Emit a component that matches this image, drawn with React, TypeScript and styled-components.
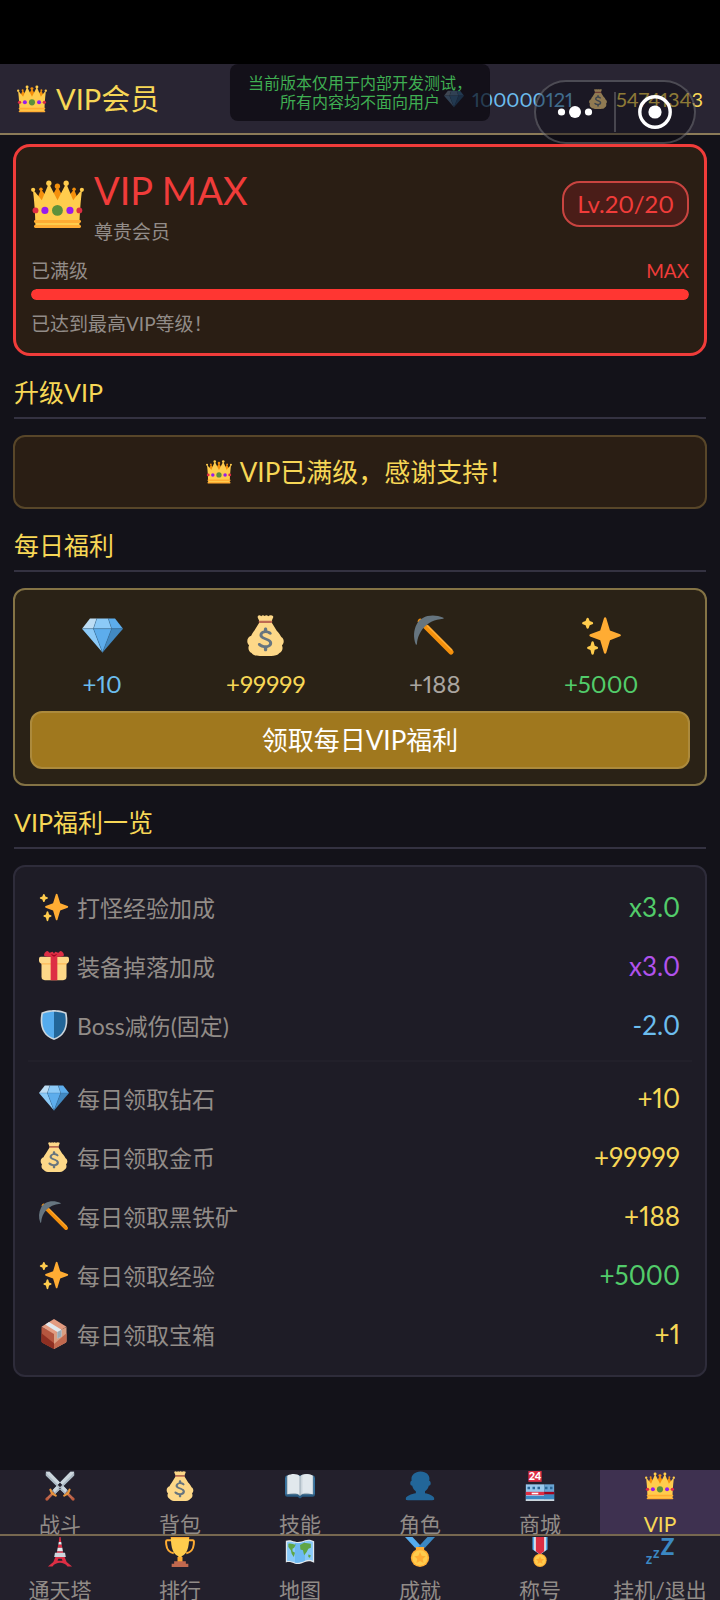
import React from "react";
import styled, { createGlobalStyle } from "styled-components";

const color = {
  page: "#131219",
  bar: "#23202c",
  header: "#292533",
  gold: "#f7d756",
  goldLine: "#8b7b58",
  text: "#928c88",
  red: "#f03c3a",
  green: "#52cc6a",
  purple: "#b152ec",
  blue: "#6cbdee",
  line: "#343241",
};

const GlobalStyle = createGlobalStyle`
  *, *::before, *::after { box-sizing: border-box; }
  html { background: #000; }
  body {
    margin: 0;
    background: ${color.page};
    color: ${color.text};
    font-family: Lato, "Noto Sans CJK SC", sans-serif;
    font-weight: 400;
    font-variant-numeric: proportional-nums;
  }
  h1, h2, p, ul, dl, dd { margin: 0; padding: 0; }
  ul { list-style: none; }
`;

/* ---------- emoji icons, all on a 36 unit grid ---------- */

const EmojiSvg = styled.svg<{ $size: number }>`
  display: block;
  flex: none;
  width: ${(p) => p.$size}px;
  height: ${(p) => p.$size}px;
  overflow: visible;
`;

const art = {
  crown: (
    <>
      <path fill="#F4900C" d="M14.174 17.075L6.75 7.594l-3.722 9.481zM17.938 5.534l-6.563 12.389H24.5zM21.826 17.075l7.424-9.481 3.722 9.481z" />
      <path fill="#FFCC4D" d="M28.669 15.19L23.887 3.523l-5.88 11.668-.007.003-.007-.004-5.88-11.668L7.331 15.19C4.197 10.833 1.28 8.042 1.28 8.042S3 20.75 3 33h30c0-12.25 1.72-24.958 1.72-24.958s-2.917 2.791-6.051 7.148z" />
      <circle fill="#5C913B" cx="17.957" cy="22" r="3.688" />
      <circle fill="#981CEB" cx="26.463" cy="22" r="2.412" />
      <circle fill="#DD2E44" cx="32.852" cy="22" r="1.986" />
      <circle fill="#981CEB" cx="9.45" cy="22" r="2.412" />
      <circle fill="#DD2E44" cx="3.061" cy="22" r="1.986" />
      <path fill="#FFAC33" d="M33 34H3a1 1 0 010-2h30a1 1 0 010 2zm0-3.486H3a1 1 0 010-2h30a1 1 0 010 2z" />
      <circle fill="#FFCC4D" cx="1.447" cy="8.042" r="1.407" />
      <circle fill="#F4900C" cx="6.75" cy="7.594" r="1.192" />
      <circle fill="#FFCC4D" cx="12.113" cy="3.523" r="1.784" />
      <circle fill="#FFCC4D" cx="34.553" cy="8.042" r="1.407" />
      <circle fill="#F4900C" cx="29.25" cy="7.594" r="1.192" />
      <circle fill="#FFCC4D" cx="23.887" cy="3.523" r="1.784" />
      <circle fill="#F4900C" cx="17.938" cy="5.534" r="1.784" />
    </>
  ),
  diamond: (
    <>
      <path fill="#BDDDF4" d="M13 3H7l-7 9h10z" />
      <path fill="#5DADEC" d="M36 12l-7-9h-6l3 9z" />
      <path fill="#4289C1" d="M26 12h10L18 33z" />
      <path fill="#8CCAF7" d="M10 12H0l18 21zm3-9l-3 9h16l-3-9z" />
      <path fill="#5DADEC" d="M18 33l-8-21h16z" />
      <path fill="none" stroke="#2b6496" strokeWidth=".35" d="M0 12h36M13 3l-3 9 8 21 8-21-3-9" />
    </>
  ),
  bag: (
    <>
      <path fill="#FDD888" d="M31.898 19.4C30.6 16.4 28 14 28 14l-5-8H13l-5 8s-1.419 1.433-2.567 4.275C3.444 18.935 2 20.789 2 23c0 1.448.625 2.743 1.609 3.655C3.233 27.357 3 28.147 3 29c0 1.958 1.136 3.636 2.775 4.454C7.204 35.585 9.992 36 13 36h10c3.016 0 5.804-.415 7.228-2.546C31.864 32.636 33 30.958 33 29c0-.807-.211-1.562-.555-2.239C33.395 25.844 34 24.542 34 23.062c0-1.5-.8-2.862-2.102-3.662z" />
      <path fill="#FDD888" d="M11.200 1c.8-1 2.300-.8 3 0 .9-1 2.300-.9 3-.1 1.200-.9 2.400-.7 3.200.1 1-.9 3.300-1 4.300 0 .6.800-.9 2.600-1.200 4.500h-11C12.200 3.500 10.600 2 11.200 1z" />
      <path fill="#BF6952" d="M24 6a1 1 0 01-1 1H13a1 1 0 010-2h10a1 1 0 011 1z" />
      <path fill="#67757F" d="M23.901 24.542c0-4.477-8.581-4.185-8.581-6.886 0-1.308 1.301-1.947 2.811-1.947 2.538 0 2.99 1.569 4.139 1.569.813 0 1.205-.493 1.205-1.046 0-1.284-2.024-2.256-3.965-2.592V12.4c0-.773-.65-1.4-1.454-1.4-.805 0-1.456.627-1.456 1.4v1.283c-2.116.463-3.938 1.875-3.938 4.148 0 4.244 8.579 4.07 8.579 6.886 0 .977-1.099 1.945-3.217 1.945-3.181 0-4.241-2.034-5.53-2.034-.627 0-1.188.508-1.188 1.251 0 1.182 2.054 2.603 5.294 3.053v1.476c0 .772.653 1.4 1.455 1.4.804 0 1.455-.628 1.455-1.4v-1.524c2.587-.475 4.391-1.826 4.391-4.342z" />
    </>
  ),
  pickaxe: (
    <>
      <path stroke="#F4900C" strokeWidth="4.6" strokeLinecap="round" d="M5.500 5.500L32.500 32.500" />
      <path stroke="#FFAC33" strokeWidth="1.4" strokeLinecap="round" d="M12 9.500L33 30.500" />
      <path fill="#66757F" d="M25.800 2.400C15.500-2 5.500 1.500 2.500 8-.4 13.200-.7 20 1.500 25.700c.3.700 1 .6 1.100-.2C3.400 15 10.500 4.500 25.600 3.300c.6-.1.700-.6.200-.9z" />
    </>
  ),
  sparkles: (
    <>
      <path fill="#FFAC33" d="M34.347 16.893l-8.899-3.294-3.323-10.891c-.128-.42-.517-.708-.956-.708-.439 0-.828.288-.956.708l-3.322 10.891-8.9 3.294c-.393.146-.653.519-.653.938 0 .418.26.793.653.938l8.895 3.293 3.324 11.223c.126.424.516.715.959.715.442 0 .833-.291.959-.716l3.324-11.223 8.896-3.293c.391-.144.652-.518.652-.937 0-.418-.261-.792-.653-.938z" />
      <path fill="#FFCC4D" d="M14.347 27.894l-2.314-.856-.9-3.3c-.118-.436-.513-.738-.964-.738-.451 0-.846.302-.965.737l-.9 3.3-2.313.856c-.393.145-.653.52-.653.938 0 .418.26.793.653.938l2.301.853.907 3.622c.112.444.511.756.97.756.459 0 .858-.312.97-.757l.907-3.622 2.301-.853c.393-.144.653-.519.653-.937 0-.418-.26-.793-.653-.937zM10.009 6.231l-2.364-.875-.876-2.365c-.145-.393-.519-.653-.938-.653-.418 0-.792.26-.938.653l-.875 2.365-2.365.875c-.393.146-.653.52-.653.938 0 .418.26.793.653.938l2.365.875.875 2.365c.146.393.52.653.938.653.418 0 .792-.26.938-.653l.875-2.365 2.365-.875c.393-.146.653-.52.653-.938 0-.418-.26-.792-.653-.938z" />
    </>
  ),
  gift: (
    <>
      <path fill="#FDD888" d="M33 31a4 4 0 01-4 4H7a4 4 0 01-4-4V13h30z" />
      <path fill="#FCAB40" d="M3 14h30v2H3z" />
      <path fill="#FDD888" d="M36 11a4 4 0 01-4 4H4a4 4 0 01-4-4V9a2 2 0 012-2h32a2 2 0 012 2z" />
      <path fill="#DD2E44" d="M14 7h8v28h-8zM18 7C16 7 8 7 6.500 6 5 4 8 0 10 0c1 0 2 2 3 2s2-1 3-1 1.500 2 2 2 1-2 2-2 2 1 3 1 2-2 3-2c2 0 5 4 3.500 6-1.500 1-9.500 1-11.500 1z" />
      <path fill="#A0041E" d="M14 3.500c1 1.500 2.500 2.500 4 3.500 1.500-1 3-2 4-3.500-1.500.2-3 .8-4 1.500-1-.7-2.500-1.300-4-1.500z" />
    </>
  ),
  shield: (
    <>
      <path fill="#CCD6DD" d="M33 3C26 0 18 0 18 0S10 0 3 3c-3 15 0 28 15 33 15-5 18-18 15-33z" />
      <path fill="#55ACEE" d="M18 33.884C6.412 29.729 1.961 19.831 4.76 4.444 11.063 2.029 17.928 2 18 2z" />
      <path fill="#226699" d="M31.24 4.444C24.955 2.024 18.131 2.001 18 2v31.884c11.589-4.155 16.04-14.053 13.24-29.44z" />
    </>
  ),
  box: (
    <>
      <path fill="#B5563F" d="M3 9.500L18 17v19L4 28.500a2 2 0 01-1-1.700z" />
      <path fill="#8E2F22" d="M3 17l15 12v7L4 28.500a2 2 0 01-1-1.700z" />
      <path fill="#D99E82" d="M33 9.500L18 17v19l14-7.500a2 2 0 001-1.700z" />
      <path fill="#C1694F" d="M33 17L18 30v6l14-7.500a2 2 0 001-1.700z" />
      <path fill="#E39B80" d="M18 0l15 9.200L18 18 3 9.200z" />
      <path fill="#E1E8ED" d="M12 3.700l15 9.300v8l-5 2.500v-8L7.500 6.500z" />
      <path fill="#99AAB5" d="M22 15.500l5-2.500v8l-5 2.500z" />
    </>
  ),
  swords: (
    <>
      <path fill="#8899A6" d="M1 1h4.500L28 24l-4 4L1 5.500zM35 1h-4.500L8 24l4 4L35 5.500z" />
      <path fill="#CCD6DD" d="M1 1h4.500L26.500 22.500 24.500 26 2 3.500zM35 1h-4.500L9.500 22.500l2 3.500L34 3.500z" />
      <path fill="#AEBBC5" d="M1 5.500V2.500L24.500 26.500 24 28zM35 5.500V2.500L11.500 26.500 12 28z" />
      <path stroke="#C1694F" strokeWidth="3.200" strokeLinecap="round" d="M9.500 26.500L3 33M26.500 26.500L33 33" />
      <path fill="none" stroke="#E8963C" strokeWidth="2.600" strokeLinecap="round" d="M6.500 22.500l2 4.500 4.500 2.500M29.500 22.500l-2 4.500-4.500 2.500" />
      <circle fill="#BE5B3C" cx="2.300" cy="33.700" r="1.900" />
      <circle fill="#BE5B3C" cx="33.700" cy="33.700" r="1.900" />
    </>
  ),
  book: (
    <>
      <path fill="#2A5B82" d="M3 5h30a3 3 0 013 3v20a3 3 0 01-3 3H21l-3 2-3-2H3a3 3 0 01-3-3V8a3 3 0 013-3z" />
      <path fill="#99AAB5" d="M2 6h14l2 2 2-2h14v22H21l-3 2-3-2H2z" />
      <path fill="#E1E8ED" d="M3 5.500C8 3 15 3 18 6.500V29c-3.500-3-10-3-15-1z" />
      <path fill="#CCD6DD" d="M33 5.500C28 3 21 3 18 6.500V29c3.500-3 10-3 15-1z" />
      <path fill="#E1E8ED" d="M33 5.500C29 3.500 24 3.400 21 5v22c3.500-1.500 8-1 12 1z" />
      <path stroke="#8899A6" strokeWidth=".9" d="M18 6.500V29" />
      <path stroke="#3B7DAE" strokeWidth="1.200" d="M1 8v20M35 8v20" />
    </>
  ),
  person: (
    <path fill="#226699" d="M24 26.799v-2.566c2-1.348 4.08-3.779 4.703-6.896.186.103.206.17.413.17.991 0 1.709-1.287 1.709-2.873 0-1.562-.823-2.827-1.794-2.865.187-.674.293-1.577.293-2.735C29.324 5.168 26 .527 18.541.527c-6.629 0-10.777 4.641-10.777 8.507 0 1.123.069 2.043.188 2.755-.911.137-1.629 1.352-1.629 2.845 0 1.587.804 2.873 1.796 2.873.206 0 .225-.067.409-.17C9.152 20.453 11 22.885 13 24.232v2.414c-5 .645-12 3.437-12 6.23v1.061C1 35 2.076 35 3.137 35h29.725C33.924 35 35 35 35 33.938v-1.061c0-2.615-6-5.225-11-6.078z" />
  ),
  store: (
    <>
      <path fill="#DD2E44" d="M4 0h16v13H4z" />
      <text x="12" y="11.200" fill="#fff" fontFamily="Lato, sans-serif" fontSize="13" fontWeight="900" textAnchor="middle">24</text>
      <path fill="#99C8EC" d="M1 16h22v20H1z" />
      <path fill="#6AA5D4" d="M23 16h12v20H23z" />
      <path fill="#3B88C3" d="M1 30h22v4H1zM23 28h12v6H23z" />
      <path fill="#2A6797" d="M3 19h3v3H3zM9 19h3v3H9zM15 19h3v3h-3zM24 19h3v3h-3zM30 19h3v3h-3z" />
      <path fill="#DD2E44" d="M1 25h22v4H1z" />
      <path fill="#A0041E" d="M23 25h12v3H23z" />
      <path fill="#fff" d="M8 26h8v2H8z" />
      <path fill="#CCD6DD" d="M1 34h34v2H1z" />
    </>
  ),
  tower: (
    <>
      <path fill="#DD2E44" d="M17.300 0h1.400l.8 6h-3zM16 9h4l.8 4h-5.600zM14.500 17h7l.8 3h-8.600z" />
      <path fill="#E1E8ED" d="M16.500 6h3l.5 3h-4zM15.200 13h5.600l.7 4h-7z" />
      <path fill="#CCD6DD" d="M12 19h12l1 5H11z" />
      <path fill="#DD2E44" d="M12.500 24h11L26 30l6.500 5.500H27c-2-3-5.500-4.500-9-4.500s-7 1.500-9 4.500H3.500L10 30z" />
      <path fill="#23202c" d="M16 26h4l1 2.500h-6z" />
    </>
  ),
  trophy: (
    <>
      <path fill="none" stroke="#FFAC33" strokeWidth="2.400" d="M8 4H2.500C1 4 1.200 6 1.500 9c.6 6 3 9.500 9 10.500M28 4h5.500C35 4 34.800 6 34.500 9c-.6 6-3 9.500-9 10.500" />
      <path fill="#FFCC4D" d="M7 0h22c0 13-3 21-9 23v8h-4v-8C10 21 7 13 7 0z" />
      <path fill="#FFAC33" d="M7 0h22v1.500H7zM15 24h6v7h-6z" />
      <path fill="#C1694F" d="M11 29h14v3H11zM8 32h20v4H8z" />
    </>
  ),
  map: (
    <>
      <path fill="#E1E8ED" d="M1 4.500C5 3 8 4 12 5.500s8 0 12-1.500 8-.5 11 1V31c-3-2-7-2.500-11-1s-8 3.500-12 2-7-2.500-11-1.500z" />
      <path fill="#88C9F9" d="M2.500 6C6 5 9 6 12 7s8 .5 12-1.500 7-.5 9.500.5V28.500c-3-1.500-6-1.500-9.500 0s-8 3-12 2-6-2-9.500-1.500z" />
      <path fill="#6DB9F2" d="M12 7c4 1.200 8 .5 12-1.500v23c-4 1.500-8 3-12 2z" />
      <path fill="#5FA545" d="M4 8c3-1 6 1 9 1l-2 4-2 1 0 3 3 2-1.500 5-2.500-4-1-4-3-4zM18 9.500l5-2.500 8 1v5l-3 1-2 4-3 4-1.500-6-3-1zM28 21l3 1-1 3-2-1z" />
    </>
  ),
  medal: (
    <>
      <path fill="#55ACEE" d="M0 0h9l12 13h-9z" />
      <path fill="#3B88C3" d="M36 0h-9L15 13h9z" />
      <path fill="#FFAC33" d="M13 12h10v4H13z" />
      <circle fill="#FFAC33" cx="18" cy="25" r="11" />
      <circle fill="#FFCC4D" cx="18" cy="25" r="9.200" />
      <path fill="#FFAC33" d="M18 18l2 4.500 4.900.5-3.700 3.300 1.100 4.900L18 28.700l-4.300 2.500 1.100-4.900-3.700-3.300 4.900-.5z" />
    </>
  ),
  ribbon: (
    <>
      <path fill="#55ACEE" d="M9 0h18v15l-9 6-9-6z" />
      <path fill="#E1E8ED" d="M11 0h14v16l-7 5-7-5z" />
      <path fill="#DD2E44" d="M13 0h10v17l-5 4-5-4z" />
      <circle fill="#FFAC33" cx="18" cy="28" r="8" />
      <circle fill="#FFCC4D" cx="18" cy="28" r="6.600" />
      <path fill="#FFAC33" d="M18 23l1.500 3.200 3.500.4-2.600 2.300.7 3.500-3.100-1.800-3.100 1.800.7-3.500-2.600-2.300 3.500-.4z" />
    </>
  ),
  sleep: (
    <g fill="#3B88C3" fontFamily="Lato, sans-serif">
      <text x="19" y="22" fontSize="27" fontWeight="900">Z</text>
      <text x="9.500" y="25.500" fontSize="17" fontWeight="700">z</text>
      <text x="1" y="32" fontSize="17" fontWeight="700">z</text>
    </g>
  ),
};

type IconName = keyof typeof art;

const Emoji = ({ name, size }: { name: IconName; size: number }) => (
  <EmojiSvg $size={size} viewBox="0 0 36 36" fill="none" aria-hidden="true">
    {art[name]}
  </EmojiSvg>
);

/* ---------- page frame ---------- */

const Page = styled.div`
  display: flex;
  flex-direction: column;
  min-height: 100vh;
`;

const StatusBar = styled.div`
  height: 64px;
  background: #000;
`;

const Header = styled.header`
  position: relative;
  display: flex;
  align-items: center;
  justify-content: space-between;
  height: 71px;
  padding: 0 17px;
  background: ${color.header};
  border-bottom: 2px solid ${color.goldLine};
`;

const Title = styled.h1`
  display: flex;
  align-items: center;
  gap: 9px;
  color: ${color.gold};
  font-size: 29px;
  line-height: 36px;
  font-weight: 400;
`;

const Wallet = styled.div`
  display: flex;
  align-items: center;
  gap: 15px;
`;

const Balance = styled.span<{ $color: string }>`
  display: flex;
  align-items: center;
  gap: 8px;
  color: ${(p) => p.$color};
  font-size: 20px;
  line-height: 28px;
`;

const Notice = styled.p`
  position: absolute;
  top: 0;
  left: 50%;
  transform: translateX(-50%);
  padding: 9px 18px 10px;
  border-radius: 8px;
  background: rgba(10, 7, 14, 0.7);
  color: #3fae52;
  font-size: 16px;
  line-height: 19px;
  text-align: center;
  white-space: nowrap;
`;

const Capsule = styled.div`
  position: absolute;
  top: 16px;
  right: 24px;
  display: flex;
  align-items: center;
  width: 162px;
  height: 64px;
  border: 2px solid rgba(255, 255, 255, 0.22);
  border-radius: 32px;
  background: rgba(12, 9, 18, 0.45);
`;

const CapsuleButton = styled.button`
  display: flex;
  flex: 1;
  align-items: center;
  justify-content: center;
  padding: 0;
  border: 0;
  background: none;
`;

const CapsuleLine = styled.span`
  width: 2px;
  height: 40px;
  background: rgba(255, 255, 255, 0.2);
`;

const Main = styled.main`
  flex: 1;
  padding: 9px 13px 24px;
`;

/* ---------- member card ---------- */

const MemberCard = styled.section`
  padding: 15px 15px 15px;
  border: 3px solid ${color.red};
  border-radius: 17px;
  background: #2a1e14;
`;

const MemberTop = styled.div`
  display: flex;
  align-items: center;
  gap: 10px;
`;

const MemberNames = styled.div`
  flex: 1;
`;

const Rank = styled.p`
  color: ${color.red};
  font-size: 38px;
  line-height: 56px;
`;

const SmallText = styled.p<{ $color?: string }>`
  color: ${(p) => p.$color ?? color.text};
  font-size: 19px;
  line-height: 28px;
`;

const LevelBadge = styled.span`
  padding: 0 13px;
  border: 2px solid #c94440;
  border-radius: 18px;
  background: #4a1d18;
  color: ${color.red};
  font-size: 24px;
  line-height: 42px;
`;

const ProgressLabels = styled.div`
  display: flex;
  justify-content: space-between;
  margin-top: 11px;
`;

const Track = styled.div`
  height: 11px;
  margin: 4px 0 10px;
  overflow: hidden;
  border-radius: 6px;
  background: #3b2a1f;
`;

const Fill = styled.div`
  height: 100%;
  border-radius: 6px;
  background: #ff3632;
`;

/* ---------- sections ---------- */

const SectionTitle = styled.h2`
  margin: 19px 1px 16px;
  padding-bottom: 8px;
  border-bottom: 2px solid ${color.line};
  color: ${color.gold};
  font-size: 25px;
  line-height: 34px;
  font-weight: 400;
`;

const ThanksBox = styled.p`
  display: flex;
  align-items: center;
  justify-content: center;
  gap: 8px;
  padding: 17px;
  border: 2px solid #584629;
  border-radius: 12px;
  background: #2a1e14;
  color: ${color.gold};
  font-size: 26px;
  line-height: 36px;
`;

const DailyBox = styled.section`
  padding: 25px 15px 15px;
  border: 2px solid #847345;
  border-radius: 12px;
  background: #2a2216;
`;

const Rewards = styled.ul`
  display: flex;
  justify-content: space-around;
`;

const Reward = styled.li<{ $color: string }>`
  display: flex;
  flex-direction: column;
  align-items: center;
  gap: 10px;
  color: ${(p) => p.$color};
  font-size: 24px;
  line-height: 36px;
`;

const ClaimButton = styled.button`
  width: 100%;
  height: 58px;
  margin-top: 9px;
  padding: 0 0 3px;
  border: 2px solid #ac8a3c;
  border-radius: 12px;
  background: #a0781e;
  color: #fff;
  font: inherit;
  font-size: 26px;
`;

const PerkBox = styled.section`
  padding: 10px 13px 12px;
  border: 2px solid #2e2c3a;
  border-radius: 12px;
  background: #1e1c26;
`;

const PerkGroup = styled.dl`
  & + & {
    margin-top: 6px;
    padding-top: 6px;
    border-top: 2px solid #22202a;
  }
`;

const Perk = styled.div`
  display: flex;
  align-items: center;
  justify-content: space-between;
  height: 59px;
  padding: 0 12px 0 11px;
`;

const PerkName = styled.dt`
  display: flex;
  align-items: center;
  gap: 8px;
  font-size: 23px;
`;

const PerkValue = styled.dd<{ $color: string }>`
  color: ${(p) => p.$color};
  font-size: 26px;
`;

/* ---------- bottom tabs ---------- */

const TabBar = styled.nav`
  background: ${color.bar};
`;

const TabRow = styled.ul`
  display: grid;
  grid-template-columns: repeat(6, 1fr);

  & + & {
    border-top: 2px solid #776850;
  }
`;

const Tab = styled.a<{ $active?: boolean }>`
  display: flex;
  flex-direction: column;
  align-items: center;
  gap: 13px;
  padding-top: 1px;
  background: ${(p) => (p.$active ? "#3e3150" : "transparent")};
  color: ${(p) => (p.$active ? color.gold : color.text)};
  font-size: 21px;
  line-height: 20px;
  text-decoration: none;
  white-space: nowrap;
`;

/* ---------- data ---------- */

const rewards: { icon: IconName; value: string; tone: string }[] = [
  { icon: "diamond", value: "+10", tone: color.blue },
  { icon: "bag", value: "+99999", tone: color.gold },
  { icon: "pickaxe", value: "+188", tone: "#aaa6a0" },
  { icon: "sparkles", value: "+5000", tone: color.green },
];

const perkGroups: { icon: IconName; name: string; value: string; tone: string }[][] = [
  [
    { icon: "sparkles", name: "打怪经验加成", value: "x3.0", tone: color.green },
    { icon: "gift", name: "装备掉落加成", value: "x3.0", tone: color.purple },
    { icon: "shield", name: "Boss减伤(固定)", value: "-2.0", tone: color.blue },
  ],
  [
    { icon: "diamond", name: "每日领取钻石", value: "+10", tone: color.gold },
    { icon: "bag", name: "每日领取金币", value: "+99999", tone: color.gold },
    { icon: "pickaxe", name: "每日领取黑铁矿", value: "+188", tone: color.gold },
    { icon: "sparkles", name: "每日领取经验", value: "+5000", tone: color.green },
    { icon: "box", name: "每日领取宝箱", value: "+1", tone: color.gold },
  ],
];

const tabRows: { icon: IconName; name: string; active?: boolean }[][] = [
  [
    { icon: "swords", name: "战斗" },
    { icon: "bag", name: "背包" },
    { icon: "book", name: "技能" },
    { icon: "person", name: "角色" },
    { icon: "store", name: "商城" },
    { icon: "crown", name: "VIP", active: true },
  ],
  [
    { icon: "tower", name: "通天塔" },
    { icon: "trophy", name: "排行" },
    { icon: "map", name: "地图" },
    { icon: "medal", name: "成就" },
    { icon: "ribbon", name: "称号" },
    { icon: "sleep", name: "挂机/退出" },
  ],
];

export default function App() {
  return (
    <Page lang="zh-CN">
      <GlobalStyle />
      <StatusBar />
      <Header>
        <Title>
          <Emoji name="crown" size={30} />
          VIP会员
        </Title>
        <Wallet>
          <Balance $color={color.blue}>
            <Emoji name="diamond" size={20} />
            100000121
          </Balance>
          <Balance $color={color.gold}>
            <Emoji name="bag" size={20} />
            54741343
          </Balance>
        </Wallet>
        <Notice>
          当前版本仅用于内部开发测试，
          <br />
          所有内容均不面向用户
        </Notice>
        <Capsule>
          <CapsuleButton type="button" aria-label="更多">
            <svg width="36" height="12" viewBox="0 0 36 12" fill="#fff" aria-hidden="true">
              <circle cx="4.500" cy="6" r="3.600" />
              <circle cx="18" cy="6" r="6" />
              <circle cx="31.500" cy="6" r="3.600" />
            </svg>
          </CapsuleButton>
          <CapsuleLine />
          <CapsuleButton type="button" aria-label="关闭">
            <svg width="34" height="34" viewBox="0 0 34 34" aria-hidden="true">
              <circle cx="17" cy="17" r="15.200" fill="none" stroke="#fff" strokeWidth="3.400" />
              <circle cx="17" cy="17" r="6.600" fill="#fff" />
            </svg>
          </CapsuleButton>
        </Capsule>
      </Header>

      <Main>
        <MemberCard>
          <MemberTop>
            <Emoji name="crown" size={53} />
            <MemberNames>
              <Rank>VIP MAX</Rank>
              <SmallText>尊贵会员</SmallText>
            </MemberNames>
            <LevelBadge>Lv.20/20</LevelBadge>
          </MemberTop>
          <ProgressLabels>
            <SmallText>已满级</SmallText>
            <SmallText $color={color.red}>MAX</SmallText>
          </ProgressLabels>
          <Track>
            <Fill />
          </Track>
          <SmallText>已达到最高VIP等级！</SmallText>
        </MemberCard>

        <SectionTitle>升级VIP</SectionTitle>
        <ThanksBox>
          <Emoji name="crown" size={26} />
          VIP已满级，感谢支持！
        </ThanksBox>

        <SectionTitle>每日福利</SectionTitle>
        <DailyBox>
          <Rewards>
            {rewards.map((r) => (
              <Reward key={r.icon} $color={r.tone}>
                <Emoji name={r.icon} size={41} />
                {r.value}
              </Reward>
            ))}
          </Rewards>
          <ClaimButton type="button">领取每日VIP福利</ClaimButton>
        </DailyBox>

        <SectionTitle>VIP福利一览</SectionTitle>
        <PerkBox>
          {perkGroups.map((group, i) => (
            <PerkGroup key={i}>
              {group.map((perk) => (
                <Perk key={perk.name}>
                  <PerkName>
                    <Emoji name={perk.icon} size={30} />
                    {perk.name}
                  </PerkName>
                  <PerkValue $color={perk.tone}>{perk.value}</PerkValue>
                </Perk>
              ))}
            </PerkGroup>
          ))}
        </PerkBox>
      </Main>

      <TabBar>
        {tabRows.map((row, i) => (
          <TabRow key={i}>
            {row.map((tab) => (
              <li key={tab.name}>
                <Tab href="#" $active={tab.active} aria-current={tab.active ? "page" : undefined}>
                  <Emoji name={tab.icon} size={30} />
                  {tab.name}
                </Tab>
              </li>
            ))}
          </TabRow>
        ))}
      </TabBar>
    </Page>
  );
}
